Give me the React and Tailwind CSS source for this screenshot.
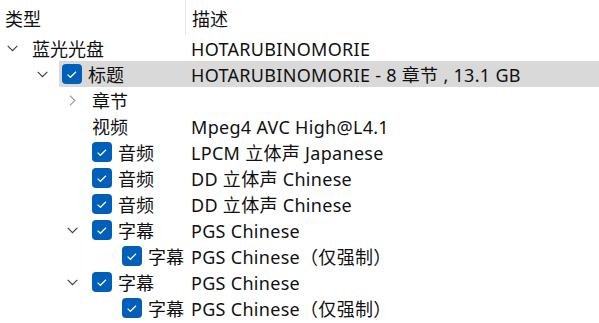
import React from 'react';

const rows = [
  { level: 0, exp: 'open', label: '蓝光光盘', desc: 'HOTARUBINOMORIE' },
  { level: 1, exp: 'open', cb: true, label: '标题', desc: 'HOTARUBINOMORIE - 8 章节 , 13.1 GB', selected: true },
  { level: 2, exp: 'closed', label: '章节', desc: '' },
  { level: 2, label: '视频', desc: 'Mpeg4 AVC High@L4.1' },
  { level: 2, cb: true, label: '音频', desc: 'LPCM 立体声 Japanese' },
  { level: 2, cb: true, label: '音频', desc: 'DD 立体声 Chinese' },
  { level: 2, cb: true, label: '音频', desc: 'DD 立体声 Chinese' },
  { level: 2, exp: 'open', cb: true, label: '字幕', desc: 'PGS Chinese' },
  { level: 3, cb: true, label: '字幕', desc: 'PGS Chinese（仅强制）' },
  { level: 2, exp: 'open', cb: true, label: '字幕', desc: 'PGS Chinese' },
  { level: 3, cb: true, label: '字幕', desc: 'PGS Chinese（仅强制）' },
];

const indent = ['w-0', 'w-[30px]', 'w-[60px]', 'w-[90px]'];
const labelW = ['w-[157px]', 'w-[127px]', 'w-[97px]', 'w-[67px]'];

function Chevron({ exp }) {
  if (exp === 'open') {
    return (
      <svg width="11" height="7" viewBox="0 0 11 7" className="text-[#404040]">
        <path d="M0.7 0.8 L5.5 5.6 L10.3 0.8" fill="none" stroke="currentColor" strokeWidth="1.2" />
      </svg>
    );
  }
  if (exp === 'closed') {
    return (
      <svg width="11" height="11" viewBox="0 0 11 11" className="text-[#9a9a9a]">
        <path d="M3 0.7 L7.8 5.5 L3 10.3" fill="none" stroke="currentColor" strokeWidth="1.2" />
      </svg>
    );
  }
  return null;
}

function Check() {
  return (
    <span className="w-[20px] h-[20px] rounded-[4px] bg-[#005fb8] flex items-center justify-center shrink-0">
      <svg width="20" height="20" viewBox="0 0 20 20">
        <path d="M5.6 10.6 L8.4 13.3 L14 7.8" fill="none" stroke="white" strokeWidth="1.2" />
      </svg>
    </span>
  );
}

export default function App() {
  return (
    <div className="w-[599px] h-[323px] bg-white overflow-hidden font-['Noto_Sans','Noto_Sans_CJK_SC',sans-serif] text-[18px] text-[#111111] leading-none">
      <div className="flex h-[35px] items-center">
        <div className="w-[186px] h-full flex items-center pl-[5px] pt-[2px] border-r border-[#e5e5e5]">类型</div>
        <div className="pl-[6px] pt-[2px]">描述</div>
      </div>
      {rows.map((r, i) => (
        <div key={i} className="flex h-[26px] items-center">
          <div className={`${indent[r.level]} shrink-0`} />
          <div className="w-[29px] shrink-0 pl-[7px] flex items-center">
            <Chevron exp={r.exp} />
          </div>
          <div className={`flex-1 h-full flex items-center ${r.selected ? 'bg-[#d9d9d9]' : ''}`}>
            <div className={`${labelW[r.level]} shrink-0 pl-[3px] flex items-center gap-[6px] whitespace-nowrap`}>
              {r.cb && <Check />}
              <span className="pt-[2px]">{r.label}</span>
            </div>
            <div className="pl-[5px] pt-[2px] whitespace-nowrap tracking-[0.3px]">{r.desc}</div>
          </div>
        </div>
      ))}
    </div>
  );
}
